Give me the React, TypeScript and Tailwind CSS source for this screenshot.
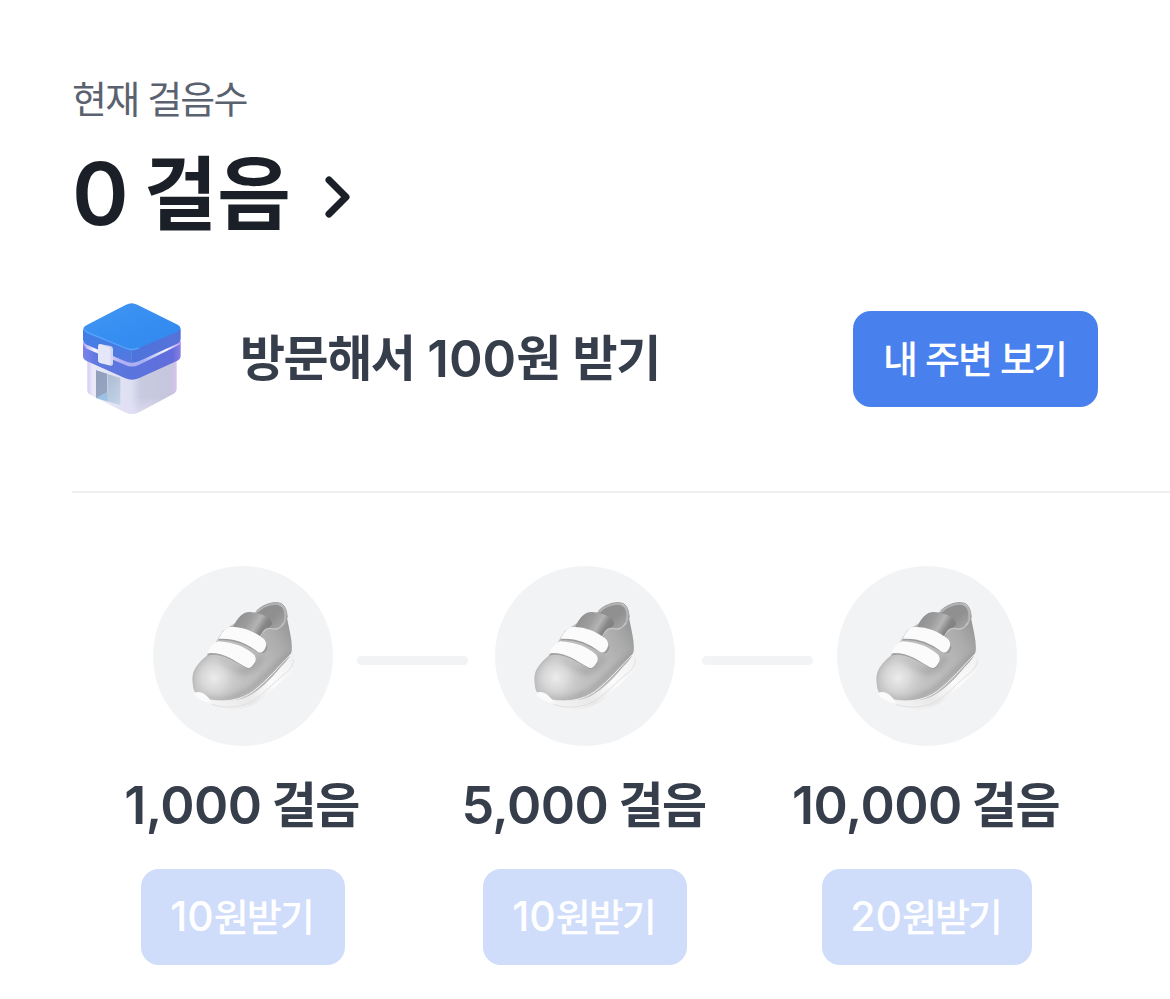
import { useId } from 'react';
import { clsx } from 'clsx';

interface Milestone {
  id: string;
  steps: string;
  reward: string;
  buttonWidth: string;
}

const milestones: Milestone[] = [
  { id: '1', steps: '1,000', reward: '10', buttonWidth: 'w-[204px]' },
  { id: '2', steps: '5,000', reward: '10', buttonWidth: 'w-[204px]' },
  { id: '3', steps: '10,000', reward: '20', buttonWidth: 'w-[210px]' },
];

function ShopIcon() {
  return (
    <svg viewBox="36 27 360 360" className="size-[120px] shrink-0">
      <defs>
        <linearGradient id="roof" x1="0" y1="0" x2="1" y2="1">
          <stop offset="0" stopColor="#4495f0" />
          <stop offset="0.45" stopColor="#388ff2" />
          <stop offset="1" stopColor="#3187ee" />
        </linearGradient>
        <linearGradient id="roofLeft" x1="0" y1="0" x2="0" y2="1">
          <stop offset="0" stopColor="#3a80e6" />
          <stop offset="1" stopColor="#5677e0" />
        </linearGradient>
        <linearGradient id="roofRight" x1="0" y1="0" x2="1" y2="0.3">
          <stop offset="0" stopColor="#4874de" />
          <stop offset="1" stopColor="#5772d8" />
        </linearGradient>
        <linearGradient id="band" x1="0" y1="0" x2="1" y2="0">
          <stop offset="0" stopColor="#7d82e8" />
          <stop offset="0.12" stopColor="#607ae2" />
          <stop offset="0.5" stopColor="#5a74dd" />
          <stop offset="0.92" stopColor="#626ddb" />
          <stop offset="1" stopColor="#8a7fe4" />
        </linearGradient>
        <linearGradient id="slit" x1="0" y1="0" x2="1" y2="0">
          <stop offset="0" stopColor="#b0a4ef" />
          <stop offset="0.12" stopColor="#f4f5ff" />
          <stop offset="0.4" stopColor="#b3aff2" />
          <stop offset="0.62" stopColor="#a5b0f0" />
          <stop offset="0.85" stopColor="#f6f6ff" />
          <stop offset="1" stopColor="#bd9cf0" />
        </linearGradient>
        <linearGradient id="wallLeft" x1="0" y1="0" x2="1" y2="0">
          <stop offset="0" stopColor="#d5ccf5" />
          <stop offset="0.12" stopColor="#e9e9f8" />
          <stop offset="1" stopColor="#dddff2" />
        </linearGradient>
        <linearGradient id="wallRight" x1="0" y1="0" x2="1" y2="0">
          <stop offset="0" stopColor="#dcdef0" />
          <stop offset="0.2" stopColor="#c8cbdf" />
          <stop offset="0.9" stopColor="#c6c6de" />
          <stop offset="1" stopColor="#dbbff4" />
        </linearGradient>
        <linearGradient id="wallGlow" x1="0" y1="0" x2="0" y2="1">
          <stop offset="0.7" stopColor="#e3def6" stopOpacity="0" />
          <stop offset="1" stopColor="#e3def6" stopOpacity="0.8" />
        </linearGradient>
        <linearGradient id="door" x1="0" y1="0" x2="1" y2="1">
          <stop offset="0" stopColor="#a3adc6" />
          <stop offset="0.5" stopColor="#b4c2d8" />
          <stop offset="1" stopColor="#c3d6ea" />
        </linearGradient>
      </defs>

      <path d="M82 205 L216 255 V372 Q205 372 194 366 L92 315 Q82 310 82 300Z" fill="url(#wallLeft)" />
      <path d="M215 255 L350 205 V296 Q350 306 340 312 L238 366 Q227 372 215 372Z" fill="url(#wallRight)" />
      <path d="M82 205 L216 260 L350 205 V296 Q350 306 340 312 L238 366 Q216 378 194 366 L92 315 Q82 310 82 300Z" fill="url(#wallGlow)" />
      <path d="M108 241 L181 264 V345 L108 324Z" fill="url(#door)" />
      <path d="M108 241 L143 252 V306 L108 324Z" fill="#8c9ab8" opacity="0.75" />
      <path d="M143 252 V334" stroke="#c7d8e9" strokeWidth="3" />
      <path d="M108 324 L143 308 V334Z" fill="#9ac2e4" />

      <path d="M69 158 L215 215 L362 155 V197 Q362 207 352 212 L238 264 Q216 275 194 264 L80 213 Q69 208 69 198Z" fill="url(#band)" />
      <path d="M69 155 L200 212 Q216 219 232 212 L362 153 V162 L236 225 Q216 234 196 225 L80 176 Q72 170 69 160Z" fill="url(#slit)" />
      <path d="M69 118 L215 180 V218 Q204 218 194 213 L80 164 Q69 158 69 148Z" fill="url(#roofLeft)" />
      <path d="M214 180 L362 116 V146 Q362 156 352 161 L238 213 Q227 218 214 218Z" fill="url(#roofRight)" />
      <path d="M198 44 Q215 35 232 44 L353 104 Q370 115 353 125 L236 174 Q216 183 196 174 L79 126 Q61 116 79 106Z" fill="url(#roof)" />
      <path d="M73 120 Q76 125 81 127 L196 174 Q216 183 236 174" fill="none" stroke="#58a6f8" strokeWidth="4" strokeLinecap="round" />

      <path d="M120 162 L151 168 Q159 170 159 177 V222 Q158 228 151 227 L121 219 Q114 217 114 210 V168 Q115 162 120 162Z" fill="#d3d5f2" />
      <path d="M121 163 L145 172 Q151 174 151 181 V226 L121 219 Q114 217 114 210 V169 Q115 161 121 163Z" fill="#e5e7f9" />
    </svg>
  );
}

function ShoeIcon() {
  const id = useId();
  const ref = (name: string) => `url(#${id}${name})`;

  return (
    <svg viewBox="-51 -45 540 540" className="size-[180px]">
      <defs>
        <linearGradient id={`${id}body`} x1="0.1" y1="0.8" x2="0.95" y2="0.3">
          <stop offset="0" stopColor="#bcbcbc" />
          <stop offset="0.35" stopColor="#c2c2c2" />
          <stop offset="0.65" stopColor="#b9b9b9" />
          <stop offset="0.85" stopColor="#ababab" />
          <stop offset="1" stopColor="#999999" />
        </linearGradient>
        <radialGradient id={`${id}toe`} gradientUnits="userSpaceOnUse" cx="132" cy="290" r="90">
          <stop offset="0" stopColor="#ececec" />
          <stop offset="0.4" stopColor="#dfdfdf" stopOpacity="0.8" />
          <stop offset="1" stopColor="#c8c8c8" stopOpacity="0" />
        </radialGradient>
        <linearGradient id={`${id}tongue`} x1="0" y1="0.2" x2="1" y2="0.6">
          <stop offset="0" stopColor="#8c8c8c" />
          <stop offset="0.4" stopColor="#9d9d9d" />
          <stop offset="0.62" stopColor="#b4b4b4" />
          <stop offset="0.8" stopColor="#878787" />
          <stop offset="1" stopColor="#7d7d7d" />
        </linearGradient>
        <linearGradient id={`${id}inner`} x1="0" y1="0" x2="1" y2="1">
          <stop offset="0" stopColor="#8f8f8f" />
          <stop offset="0.55" stopColor="#909090" />
          <stop offset="1" stopColor="#adadad" />
        </linearGradient>
        <linearGradient id={`${id}sole`} x1="0" y1="1" x2="1" y2="0">
          <stop offset="0" stopColor="#fafafa" />
          <stop offset="0.35" stopColor="#e9e9e9" />
          <stop offset="0.6" stopColor="#fbfbfb" />
          <stop offset="1" stopColor="#efefef" />
        </linearGradient>
        <filter id={`${id}soft`} filterUnits="userSpaceOnUse" x="0" y="0" width="450" height="450">
          <feGaussianBlur stdDeviation="8" />
        </filter>
        <clipPath id={`${id}clip`}>
          <path d="M68 305 C62 270 85 245 116 219 L158 150 L205 120 L262 90 C285 72 312 64 330 71 C346 78 350 100 354 125 C360 155 368 185 365 211 C360 230 345 245 328 263 C298 299 262 336 222 351 C190 361 150 361 122 356 C110 342 92 332 76 336 C70 326 69 316 68 305Z" />
        </clipPath>
      </defs>

      <path d="M72 336 C90 362 125 378 165 385 C210 391 245 378 277 354 C307 329 332 300 360 278 C376 264 377 240 366 202 L330 240 L200 330Z" fill={ref('sole')} />
      <path d="M125 370 C165 384 210 380 247 361 C287 335 314 301 347 276 C362 264 369 252 371 236" fill="none" stroke="#dfdfdf" strokeWidth="3" />

      <g clipPath={ref('clip')}>
        <rect x="50" y="50" width="330" height="330" fill={ref('body')} />
        <path d="M100 350 C150 365 215 348 257 312 C295 277 335 235 364 218" fill="none" stroke="#8e8e8e" strokeWidth="14" opacity="0.55" filter={ref('soft')} />
        <path d="M64 325 C62 270 85 240 112 222" fill="none" stroke="#8e8e8e" strokeWidth="12" opacity="0.6" filter={ref('soft')} />
        <path d="M150 240 C200 280 245 285 275 225" fill="none" stroke="#a0a0a0" strokeWidth="24" opacity="0.6" filter={ref('soft')} />
        <circle cx="132" cy="290" r="90" fill={ref('toe')} />
      </g>
      <path d="M122 357 C165 365 213 357 250 331 C293 298 323 259 365 217" fill="none" stroke="#f1f1f1" strokeWidth="3" />

      <path d="M262 92 C285 72 318 63 333 73 C352 86 350 127 330 136 C312 145 294 137 277 155 L250 125Z" fill={ref('inner')} />
      <path d="M262 92 C285 70 318 63 333 73 C349 82 351 121 336 133" fill="none" stroke="#b6b6b6" strokeWidth="6" />
      <path d="M259 90 C283 67 318 59 336 69 C347 77 350 91 352 110" fill="none" stroke="#8b8b8b" strokeWidth="2.5" />
      <path d="M190 138 C201 110 219 91 242 93 C271 97 302 106 306 126 C306 137 291 143 282 150 L274 169Z" fill={ref('tongue')} />
      <path d="M272 166 C280 148 291 139 305 143 C318 147 332 141 340 128" fill="none" stroke="#c6c6c6" strokeWidth="4" strokeLinecap="round" />

      <path d="M147 176 C190 171 221 187 270 214 C283 217 290 207 290 196" fill="none" stroke="#808080" strokeWidth="5" opacity="0.55" />
      <path d="M147 174 C151 159 165 141 179 138 C222 137 253 152 281 173 C293 185 289 202 277 213 Q271 217 263 212 C226 185 191 171 147 174Z" fill="#fbfbfb" />
      <path d="M112 221 C153 211 187 235 232 260 Q246 263 254 245" fill="none" stroke="#858585" strokeWidth="5" opacity="0.55" />
      <path d="M112 217 C117 201 131 184 147 181 C193 185 224 197 251 220 C262 231 257 246 244 258 Q237 263 228 259 C189 237 158 212 112 217Z" fill="#fbfbfb" />

      <path d="M72 337 C82 330 98 333 110 345 Q118 354 127 366 C101 364 77 353 72 337Z" fill="#fbfbfb" />
    </svg>
  );
}

function Connector() {
  return <div className="h-[9px] w-[111px] rounded-full bg-[#f2f3f5]" />;
}

export default function App() {
  return (
    <main className="h-[999px] w-[1170px] overflow-hidden bg-white pt-[78px] font-['Inter','Noto_Sans_CJK_KR',sans-serif] text-[#373e4b]">
      <header className="pl-[72px]">
        <p className="h-10 whitespace-nowrap text-[38px] leading-[42px] tracking-[-1.8px] text-[#5a6270]">현재 걸음수</p>
        <h1 className="mt-[31px] flex h-[90px] items-center whitespace-nowrap text-[86px] leading-[90px] font-semibold text-[#1b1f27]">
          <span>0</span>
          <span className="ml-[15px] text-[80px] font-bold">걸음</span>
          <svg viewBox="0 0 28 44" className="mt-1.5 ml-[33px] h-11 w-7" fill="none" stroke="currentColor" strokeWidth="7" strokeLinecap="round" strokeLinejoin="round">
            <path d="M5 5 22 22 5 39" />
          </svg>
        </h1>
      </header>

      <section className="mt-[60px] flex h-[120px] items-center px-[72px]">
        <ShopIcon />
        <h2 className="ml-12 flex items-center whitespace-nowrap text-[51px] leading-[60px] font-semibold">
          <span className="text-[49px] font-bold tracking-[-1.5px]">방문해서</span>
          <span className="ml-[13px]">100</span>
          <span className="text-[49px] font-bold tracking-[-1.2px] [word-spacing:2px]">원 받기</span>
        </h2>
        <button className="ml-auto h-24 w-[245px] rounded-[18px] bg-[#4880ee] pr-0.5 text-[38px] font-medium tracking-[-2px] [word-spacing:1px] whitespace-nowrap text-white">
          내 주변 보기
        </button>
      </section>

      <div className="mt-[72px] ml-[72px] h-[2px] bg-[#eeeff1]" />

      <section className="mt-[73px]">
        <div className="flex items-center pl-[153px]">
          {milestones.map((m, i) => (
            <div key={m.id} className="flex items-center">
              {i > 0 && (
                <div className={clsx('pt-2', i === 1 ? 'pr-[27px] pl-6' : 'pr-6 pl-[27px]')}>
                  <Connector />
                </div>
              )}
              <div className="size-[180px] overflow-hidden rounded-full bg-[#f2f3f5]">
                <ShoeIcon />
              </div>
            </div>
          ))}
        </div>

        <div className="mt-[30px] grid grid-cols-3 px-[72px]">
          {milestones.map((m) => (
            <div key={m.id} className="flex flex-col items-center">
              <h3 className="flex h-[60px] items-center pr-[3px] whitespace-nowrap text-[52px] leading-[60px] font-semibold">
                <span className="tracking-[-0.5px]">{m.steps}</span>
                <span className="ml-2.5 text-[49px] font-bold tracking-[-1.5px]">걸음</span>
              </h3>
              <button
                disabled
                className={clsx(
                  'mt-[33px] flex h-24 items-center justify-center rounded-[18px] bg-[#cfddfa] pr-[3px] text-[41px] font-medium whitespace-nowrap text-white',
                  m.buttonWidth,
                )}
              >
                <span>{m.reward}</span>
                <span className="text-[38px] tracking-[-2px]">원받기</span>
              </button>
            </div>
          ))}
        </div>
      </section>
    </main>
  );
}
